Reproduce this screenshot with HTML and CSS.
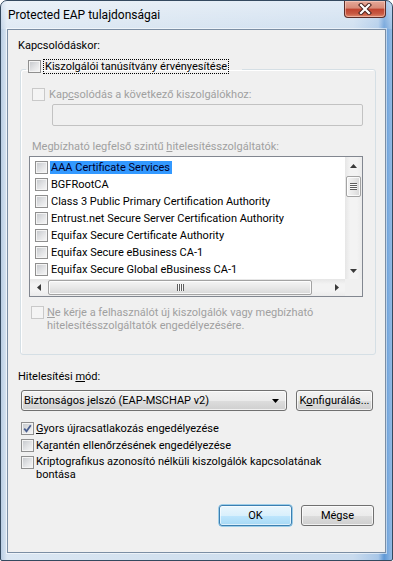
FILE: index.html
```html
<!DOCTYPE html>
<html lang="hu">
<head>
  <meta charset="UTF-8">
  <meta name="viewport" content="width=device-width, initial-scale=1.0">
  <title>Protected EAP tulajdonságai</title>
  <link rel="stylesheet" href="styles.css">
</head>
<body>
  <div class="window">
    <div class="titlebar">
      <span class="title">Protected EAP tulajdonságai</span>
      <div class="close-btn">
        <svg width="14" height="12" viewBox="0 0 14 12">
          <path d="M3 2 L11 10 M11 2 L3 10" stroke="#4b2420" stroke-width="4.2" stroke-linecap="square"/>
          <path d="M3 2 L11 10 M11 2 L3 10" stroke="#fff" stroke-width="2.2" stroke-linecap="square"/>
        </svg>
      </div>
    </div>

    <div class="client">
      <div class="lbl lbl-top">Kapcsolódáskor:</div>

      <fieldset class="group">
        <legend class="group-legend">
          <span class="check"></span>
          <span class="focus">Kiszolgálói tanúsítvány érvényesítése</span>
        </legend>

        <div class="chk-row in-group disabled">
          <span class="check"></span>
          <span>Kap<u>c</u>solódás a következő kiszolgálókhoz:</span>
        </div>
        <div class="edit"></div>

        <div class="lbl in-group disabled">Megbízható legfelső szintű <u>h</u>itelesítésszolgáltatók:</div>

        <div class="list">
          <div class="list-body">
            <div class="items">
              <div class="item"><span class="check"></span><span class="item-text selected">AAA Certificate Services</span></div>
              <div class="item"><span class="check"></span><span class="item-text">BGFRootCA</span></div>
              <div class="item"><span class="check"></span><span class="item-text">Class 3 Public Primary Certification Authority</span></div>
              <div class="item"><span class="check"></span><span class="item-text">Entrust.net Secure Server Certification Authority</span></div>
              <div class="item"><span class="check"></span><span class="item-text">Equifax Secure Certificate Authority</span></div>
              <div class="item"><span class="check"></span><span class="item-text">Equifax Secure eBusiness CA-1</span></div>
              <div class="item"><span class="check"></span><span class="item-text">Equifax Secure Global eBusiness CA-1</span></div>
            </div>
            <div class="vscroll">
              <div class="sb-btn">
                <svg width="7" height="4" viewBox="0 0 7 4"><path d="M0 4 L3.5 0 L7 4 Z" fill="#3a3a3a"/></svg>
              </div>
              <div class="sb-track">
                <div class="vthumb"><span class="grip-v"></span></div>
              </div>
              <div class="sb-btn">
                <svg width="7" height="4" viewBox="0 0 7 4"><path d="M0 0 L7 0 L3.5 4 Z" fill="#3a3a3a"/></svg>
              </div>
            </div>
          </div>
          <div class="hscroll-row">
            <div class="hscroll">
              <div class="sb-btn">
                <svg width="4" height="7" viewBox="0 0 4 7"><path d="M4 0 L4 7 L0 3.5 Z" fill="#3a3a3a"/></svg>
              </div>
              <div class="sb-track">
                <div class="hthumb"><span class="grip-h"></span></div>
              </div>
              <div class="sb-btn">
                <svg width="4" height="7" viewBox="0 0 4 7"><path d="M0 0 L4 3.5 L0 7 Z" fill="#3a3a3a"/></svg>
              </div>
            </div>
            <div class="sb-corner"></div>
          </div>
        </div>

        <div class="chk-row multi in-group2 disabled">
          <span class="check"></span>
          <span><u>N</u>e kérje a felhasználót új kiszolgálók vagy megbízható<br>hitelesítésszolgáltatók engedélyezésére.</span>
        </div>
      </fieldset>

      <div class="lbl lbl-mode">Hitelesítési <u>m</u>ód:</div>

      <div class="mode-row">
        <div class="combo">
          <span>Biztonságos jelszó (EAP-MSCHAP v2)</span>
          <svg width="7" height="4" viewBox="0 0 7 4"><path d="M0 0 L7 0 L3.5 4 Z" fill="#000"/></svg>
        </div>
        <button class="btn btn-config">K<u>o</u>nfigurálás...</button>
      </div>

      <div class="options">
        <div class="chk-row opt">
          <span class="check checked">
            <svg width="9" height="9" viewBox="0 0 9 9"><path d="M1.2 4.6 L3.5 7.2 L7.8 1.2" fill="none" stroke="#4a5f8f" stroke-width="1.8"/></svg>
          </span>
          <span><u>G</u>yors újracsatlakozás engedélyezése</span>
        </div>
        <div class="chk-row opt">
          <span class="check"></span>
          <span>Ka<u>r</u>antén ellenőrzésének engedélyezése</span>
        </div>
        <div class="chk-row opt multi">
          <span class="check"></span>
          <span>Kriptografikus azonosító nélküli kiszolgálók kapcsolatának<br>bontása</span>
        </div>
      </div>

      <div class="dialog-buttons">
        <button class="btn btn-default">OK</button>
        <button class="btn">Mégse</button>
      </div>
    </div>
  </div>
</body>
</html>
```

FILE: styles.css
```css
* {
  box-sizing: border-box;
}

body {
  margin: 0;
  font-family: Roboto, "Open Sans", sans-serif;
  font-size: 11px;
  color: #000;
  background: #fff;
}

u {
  text-decoration: underline;
  text-underline-offset: 1px;
}

/* Ablakkeret (Aero) */
.window {
  width: 393px;
  height: 561px;
  display: flex;
  flex-direction: column;
  border: 1px solid #34495f;
  border-radius: 7px 7px 2px 2px;
  background: linear-gradient(to right, #b9cde3 0%, #dbe7f3 1.5%, #d3e1ef 40%, #c9dbee 90%, #a9c7e8 96.5%, #5f98d6 98%, #94bbe4 100%);
  overflow: hidden;
}

.titlebar {
  height: 28px;
  display: flex;
  justify-content: space-between;
  align-items: flex-start;
  background: linear-gradient(to bottom, rgba(255, 255, 255, 0.45), rgba(255, 255, 255, 0.15));
}

.title {
  font-size: 12px;
  line-height: 28px;
  padding-left: 7px;
}

.close-btn {
  width: 42px;
  height: 17px;
  margin-right: 6px;
  display: flex;
  align-items: center;
  justify-content: center;
  border: 1px solid #5b2d28;
  border-top: none;
  border-radius: 0 0 4px 4px;
  background: linear-gradient(to bottom, #e6a999 0%, #d78a78 45%, #c0432f 50%, #c85a43 80%, #e08b6f 100%);
  box-shadow: inset 0 0 0 1px rgba(255, 220, 210, 0.5);
}

/* Tartalom */
.client {
  flex: 1;
  margin: 0 6px 7px 6px;
  border: 1px solid #7b8ea4;
  background: #f0f0f0;
  box-shadow: 0 0 0 1px rgba(255, 255, 255, 0.55);
  display: flex;
  flex-direction: column;
}

.lbl {
  line-height: 15px;
  margin-left: 10px;
}

.lbl-top {
  margin-top: 8px;
}

.disabled {
  color: #a0a0a0;
}

.group {
  margin: 6px 9px 0 12px;
  padding: 0 0 22px 0;
  min-width: 0;
  border: 1px solid #d5dfe5;
  border-radius: 3px;
  box-shadow: inset 1px 1px 0 #fff;
}

.group-legend {
  display: flex;
  align-items: flex-start;
  margin-left: 5px;
  padding: 0 13px 6px 2px;
}

.focus {
  line-height: 13px;
  margin-left: 2px;
  padding: 0 1px;
  border: 1px dotted #000;
}

.group-legend .check {
  margin-top: 1px;
}

/* Jelölőnégyzet */
.check {
  width: 13px;
  height: 13px;
  flex-shrink: 0;
  display: flex;
  align-items: center;
  justify-content: center;
  border: 1px solid #8f8f8f;
  background: linear-gradient(135deg, #c3c6ca 0%, #e3e4e6 55%, #f8f8f8 100%);
  box-shadow: inset 0 0 0 1px #f4f4f4;
}

.disabled .check {
  border-color: #c9c9c9;
  background: #f4f4f4;
  box-shadow: none;
}

.chk-row {
  display: flex;
  align-items: center;
  gap: 4px;
  line-height: 15px;
}

.chk-row.multi {
  align-items: flex-start;
  line-height: 13px;
  gap: 3px;
}

.in-group {
  margin: 7px 0 0 11px;
}

.in-group2 {
  margin: 9px 0 0 10px;
}

.edit {
  margin: 2px 0 0 31px;
  width: 311px;
  height: 22px;
  border: 1px solid #c2c2c2;
  border-radius: 2px;
  background: #f0f0f0;
}

.lbl.in-group {
  margin: 13px 0 0 11px;
}

/* Lista */
.list {
  margin: 2px 0 0 8px;
  width: 334px;
  height: 141px;
  border: 1px solid #828790;
  background: #fff;
  display: flex;
  flex-direction: column;
}

.list-body {
  flex: 1;
  display: flex;
  min-height: 0;
}

.items {
  flex: 1;
  overflow: hidden;
  padding-top: 2px;
}

.item {
  height: 17px;
  display: flex;
  align-items: center;
  padding-left: 5px;
  white-space: nowrap;
}

.item-text {
  margin-left: 2px;
  padding: 0 2px 0 1px;
  line-height: 13px;
}

.item-text.selected {
  background: #3399ff;
  color: #00002a;
}

.vscroll {
  width: 17px;
  display: flex;
  flex-direction: column;
  background: linear-gradient(to right, #e6e6e6, #f3f3f3 30%, #f3f3f3 70%, #ebebeb);
}

.sb-btn {
  width: 17px;
  height: 17px;
  flex-shrink: 0;
  display: flex;
  align-items: center;
  justify-content: center;
}

.sb-track {
  flex: 1;
  display: flex;
}

.vthumb {
  margin: 2px 0 0 1px;
  width: 15px;
  height: 21px;
  border: 1px solid #a3a3a3;
  border-radius: 2px;
  background: linear-gradient(to right, #f5f5f5, #e8e8e8 50%, #d8d8d8);
  box-shadow: inset 0 0 0 1px rgba(255, 255, 255, 0.8);
  display: flex;
  align-items: center;
  justify-content: center;
}

.grip-v {
  width: 7px;
  height: 7px;
  background: repeating-linear-gradient(to bottom, #5e5e5e 0 1px, #fafafa 1px 2px);
}

.hscroll-row {
  height: 17px;
  display: flex;
}

.hscroll {
  flex: 1;
  display: flex;
  background: linear-gradient(to bottom, #e6e6e6, #f3f3f3 30%, #f3f3f3 70%, #ebebeb);
}

.hthumb {
  margin: 1px 0 0 1px;
  width: 264px;
  height: 15px;
  border: 1px solid #a3a3a3;
  border-radius: 2px;
  background: linear-gradient(to bottom, #f5f5f5, #e8e8e8 50%, #d8d8d8);
  box-shadow: inset 0 0 0 1px rgba(255, 255, 255, 0.8);
  display: flex;
  align-items: center;
  justify-content: center;
}

.grip-h {
  width: 7px;
  height: 7px;
  background: repeating-linear-gradient(to right, #5e5e5e 0 1px, #fafafa 1px 2px);
}

.sb-corner {
  width: 17px;
  background: #f0f0f0;
}

/* Hitelesítési mód */
.lbl-mode {
  margin-top: 14px;
}

.mode-row {
  display: flex;
  gap: 9px;
  margin: 6px 0 0 13px;
}

.combo {
  width: 266px;
  height: 21px;
  display: flex;
  align-items: center;
  justify-content: space-between;
  padding: 0 7px 0 2px;
  border: 1px solid #707070;
  border-radius: 3px;
  background: linear-gradient(to bottom, #f2f2f2 0%, #ebebeb 50%, #dddddd 51%, #cfcfcf 100%);
  box-shadow: inset 0 0 0 1px rgba(255, 255, 255, 0.7);
}

.btn {
  height: 21px;
  padding: 0;
  font: inherit;
  color: #000;
  border: 1px solid #707070;
  border-radius: 3px;
  background: linear-gradient(to bottom, #f2f2f2 0%, #ebebeb 50%, #dddddd 51%, #cfcfcf 100%);
  box-shadow: inset 0 0 0 1px rgba(255, 255, 255, 0.7);
}

.btn-config {
  width: 77px;
}

.options {
  margin: 9px 0 0 13px;
}

.chk-row.opt {
  gap: 2px;
  line-height: 17px;
}

.chk-row.opt.multi {
  margin-top: 1px;
  line-height: 13px;
}

.chk-row.opt.multi .check {
  margin-top: 1px;
}

.dialog-buttons {
  display: flex;
  justify-content: flex-end;
  gap: 9px;
  margin: 24px 11px 0 0;
}

.dialog-buttons .btn {
  width: 73px;
}

.btn-default {
  border-color: #3c7fb1;
  background: linear-gradient(to bottom, #eaf6fd 0%, #d9f0fc 50%, #bee6fd 51%, #a7d9f5 100%);
  box-shadow: inset 0 0 0 1px rgba(255, 255, 255, 0.6), 0 0 0 0.5px #48a9e0;
}
```
